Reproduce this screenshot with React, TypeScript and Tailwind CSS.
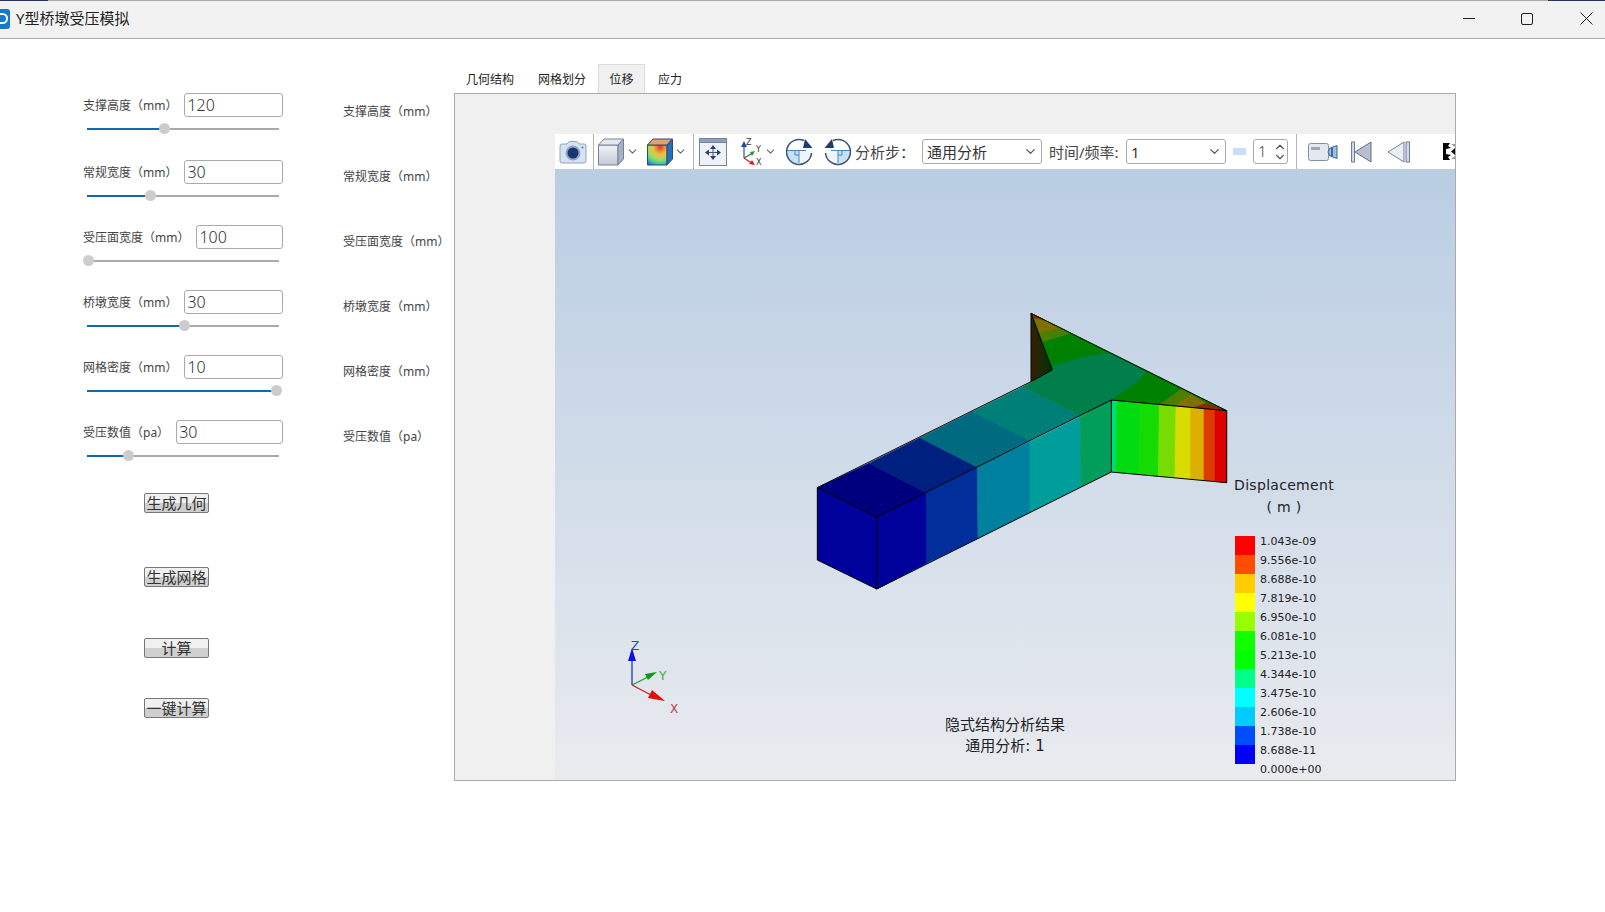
import React from "react";
import { ChevronDown, ChevronUp } from "lucide-react";

const PARAMS = [
  { label: "支撑高度（mm）", value: "120", thumb: 77 },
  { label: "常规宽度（mm）", value: "30", thumb: 63 },
  { label: "受压面宽度（mm）", value: "100", thumb: 1 },
  { label: "桥墩宽度（mm）", value: "30", thumb: 97 },
  { label: "网格密度（mm）", value: "10", thumb: 189 },
  { label: "受压数值（pa）", value: "30", thumb: 41 },
];

const LEGEND = [
  { color: "#ff0000", text: "1.043e-09" },
  { color: "#ff4d00", text: "9.556e-10" },
  { color: "#ffcc00", text: "8.688e-10" },
  { color: "#ffff00", text: "7.819e-10" },
  { color: "#99ff00", text: "6.950e-10" },
  { color: "#11ff00", text: "6.081e-10" },
  { color: "#00ff00", text: "5.213e-10" },
  { color: "#00ff88", text: "4.344e-10" },
  { color: "#00ffff", text: "3.475e-10" },
  { color: "#00ccff", text: "2.606e-10" },
  { color: "#004dff", text: "1.738e-10" },
  { color: "#0000ff", text: "8.688e-11" },
];

const TOP_FACE = [
  { fill: "#00007f", d: "52,563 207,490 378,577 230,651" },
  { fill: "#00207f", d: "207,490 360,413 530,500 378,577" },
  { fill: "#006b80", d: "360,413 517,335 690,420 530,500" },
  { fill: "#007f78", d: "517,335 670,260 838,347 690,420" },
  { fill: "#008000", d: "757,210 693,40 1280,332 934,300" },
  { fill: "#7f7000", d: "703,55 730,58 785,85 718,100" },
  { fill: "#4a8000", d: "718,100 785,85 812,99 728,125" },
  { fill: "#8a2a00", d: "693,40 730,58 703,55" },
  { fill: "#4a8000", d: "1143,268 1172,283 1125,316 1085,310" },
  { fill: "#7f7000", d: "1172,283 1220,310 1185,322 1125,316" },
  { fill: "#8a2a00", d: "1220,310 1280,332 1185,322" },
  { fill: "#007f4a", d: "670,260 757,210 760,197 860,170 925,158 1035,213 1020,240 960,280 934,300 838,347" },
];

const SIDE_FACE = [
  { fill: "#00009b", d: "230,651 380,577 380,790 230,867" },
  { fill: "#002e9b", d: "380,577 532,500 534,715 380,790" },
  { fill: "#00809f", d: "532,500 690,425 690,637 534,715" },
  { fill: "#009e9a", d: "690,425 840,350 843,560 690,637" },
  { fill: "#009e5a", d: "840,350 934,300 934,516 843,560" },
  { fill: "#00dc78", d: "934,300 950,302 948,517 934,516" },
  { fill: "#00dc10", d: "950,302 1021,308 1018,523 948,517" },
  { fill: "#14dc00", d: "1021,308 1078,314 1075,528 1018,523" },
  { fill: "#78dc00", d: "1078,314 1128,319 1125,533 1075,528" },
  { fill: "#d8dc00", d: "1128,319 1172,323 1172,537 1125,533" },
  { fill: "#dcb000", d: "1172,323 1212,326 1212,541 1172,537" },
  { fill: "#dc3c00", d: "1212,326 1245,329 1245,544 1212,541" },
  { fill: "#dc0000", d: "1245,329 1280,332 1280,548 1245,544" },
];

function Model() {
  return (
    <svg className="absolute left-[245px] top-[131px] h-[300px] w-[440px]" viewBox="0 0 1320 900">
      <defs>
        <linearGradient id="wing" x1="0" x2="1" y1="0" y2="0">
          <stop offset="0" stopColor="#3a1c04" />
          <stop offset="0.5" stopColor="#1c2a04" />
          <stop offset="1" stopColor="#003000" />
        </linearGradient>
      </defs>
      <polygon points="52,563 230,651 230,867 52,780" fill="#00009b" />
      {SIDE_FACE.map((p) => (
        <polygon key={p.d} points={p.d} fill={p.fill} stroke={p.fill} strokeWidth="2" />
      ))}
      {TOP_FACE.map((p) => (
        <polygon key={p.d} points={p.d} fill={p.fill} stroke={p.fill} strokeWidth="2" />
      ))}
      <polygon points="693,40 757,210 693,245" fill="url(#wing)" />
      <g fill="none" stroke="#000" strokeWidth="3" strokeLinejoin="round">
        <path d="M230 651 L52 563 L52 780 L230 867 L934 516 L934 300 L230 651 L230 867" />
        <path d="M52 563 L693 245 L757 210 L693 40 L693 245" />
        <path d="M693 40 L1280 332 L1280 548 L934 516 M934 300 L1280 332" />
      </g>
    </svg>
  );
}

function Triad() {
  return (
    <svg className="absolute left-[60px] top-[466px] h-[80px] w-[70px]" viewBox="0 0 70 80">
      <path d="M17 50 V24" stroke="#2f3fc0" strokeWidth="1.4" />
      <path d="M17 13 L21 26 H13 Z" fill="#0a14e0" />
      <path d="M17 50 L33 42" stroke="#20a020" strokeWidth="1.2" />
      <path d="M42 37 L33 45 L30 39 Z" fill="#0a9a14" />
      <path d="M17 50 L36 60" stroke="#c02020" strokeWidth="1.2" />
      <path d="M50 66 L33 63 L37 55 Z" fill="#e80c0c" />
      <text x="16" y="15" fontSize="12" fill="#3040d8" fontFamily="DejaVu Sans">Z</text>
      <text x="44" y="45" fontSize="12" fill="#30b040" fontFamily="DejaVu Sans">Y</text>
      <text x="55" y="78" fontSize="12" fill="#c04048" fontFamily="DejaVu Sans">X</text>
    </svg>
  );
}

function CameraIcon() {
  return (
    <svg className="ml-[4px] h-[26px] w-[28px] shrink-0" viewBox="0 0 28 26">
      <path d="M1 7 Q1 5 3 5 H8 L10 2.5 H18 L20 5 H25 Q27 5 27 7 V22 Q27 24 25 24 H3 Q1 24 1 22 Z" fill="#d6e2f0" stroke="#8ea6c8" />
      <circle cx="14" cy="14" r="7.5" fill="#8fa6c6" />
      <circle cx="14" cy="14" r="5.5" fill="#1c3570" />
      <circle cx="23.5" cy="8.5" r="1" fill="#5a6f92" />
    </svg>
  );
}

function CubeIcon() {
  return (
    <svg className="ml-[4px] h-[28px] w-[26px] shrink-0" viewBox="0 0 26 28">
      <defs>
        <linearGradient id="cubeFront" x1="0" x2="0" y1="0" y2="1">
          <stop offset="0" stopColor="#f2f3f6" />
          <stop offset="1" stopColor="#c5c9d5" />
        </linearGradient>
      </defs>
      <path d="M0.5 7 H20 V27 H0.5 Z" fill="url(#cubeFront)" stroke="#72829e" />
      <path d="M0.5 7 L6 1 H25.5 L20 7 Z" fill="#e6e8ee" stroke="#72829e" />
      <path d="M20 7 L25.5 1 V21 L20 27 Z" fill="#a9b1c0" stroke="#72829e" />
    </svg>
  );
}

function ColorCubeIcon() {
  return (
    <svg className="ml-[8px] h-[28px] w-[26px] shrink-0" viewBox="0 0 26 28">
      <defs>
        <radialGradient id="heat" cx="0.65" cy="0.1" r="1.05">
          <stop offset="0" stopColor="#d83a2a" />
          <stop offset="0.35" stopColor="#f0c040" />
          <stop offset="0.6" stopColor="#9fdc60" />
          <stop offset="0.8" stopColor="#40c8a0" />
          <stop offset="1" stopColor="#2a60d0" />
        </radialGradient>
      </defs>
      <path d="M0.5 7 H20 V27 H0.5 Z" fill="url(#heat)" stroke="#2a4a80" />
      <path d="M0.5 7 L6 1 H25.5 L20 7 Z" fill="#e0a070" stroke="#2a4a80" />
      <path d="M20 7 L25.5 1 V21 L20 27 Z" fill="#2070c0" stroke="#2a4a80" />
    </svg>
  );
}

function FitIcon() {
  return (
    <svg className="ml-[5px] h-[28px] w-[28px] shrink-0" viewBox="0 0 28 28">
      <rect x="0.5" y="0.5" width="27" height="27" fill="#eef1f6" stroke="#74849f" />
      <rect x="0.5" y="0.5" width="27" height="4" fill="#8ea0bb" stroke="#74849f" />
      <path d="M14 9 V20 M8.5 14.5 H19.5" stroke="#44587a" />
      <path d="M14 7 L17 11 H11 Z M14 22 L17 18 H11 Z M6 14.5 L10 11.5 V17.5 Z M22 14.5 L18 11.5 V17.5 Z" fill="#2c4066" />
    </svg>
  );
}

function AxesIcon() {
  return (
    <svg className="ml-[13px] h-[28px] w-[24px] shrink-0" viewBox="0 0 24 28">
      <path d="M4 20 V7" stroke="#2850a0" strokeWidth="1.2" />
      <path d="M4 3 L7 9 H1 Z" fill="#1c4aa8" />
      <path d="M4 20 L13 15" stroke="#208030" strokeWidth="1.2" />
      <path d="M15 13 L10 14 L12 18 Z" fill="#18983a" />
      <path d="M4 20 L13 26" stroke="#d02030" strokeWidth="1.2" />
      <path d="M15 27 L9 26 L12 22 Z" fill="#e81828" />
      <text x="6" y="7" fontSize="8" fill="#333" fontFamily="DejaVu Sans">Z</text>
      <text x="16" y="14" fontSize="8" fill="#333" fontFamily="DejaVu Sans">Y</text>
      <text x="16" y="27" fontSize="8" fill="#333" fontFamily="DejaVu Sans">X</text>
    </svg>
  );
}

function RotateIcon({ className }: { className: string }) {
  return (
    <svg className={`h-[28px] w-[27px] shrink-0 ${className}`} viewBox="0 0 27 28">
      <path d="M0.8 12.5 H13 V25.5 A12.5 12.5 0 0 1 0.8 12.5 Z" fill="#c6e0f6" />
      <path d="M13 12.5 H25.4 A12.5 12.5 0 0 1 13 25.5 Z" fill="#eef6fc" />
      <path d="M0.8 12.5 H20 M13 12.5 V25 M9 12.5 V17 H13" fill="none" stroke="#4a86bc" />
      <path d="M18 2.5 A12.5 12.5 0 1 0 25.5 15" fill="none" stroke="#3c5272" strokeWidth="1.5" />
      <path d="M26.5 10 L19 1 L17 10 Z" fill="#1e3c6c" />
    </svg>
  );
}

function VideoIcon() {
  return (
    <svg className="ml-[11px] h-[18px] w-[30px] shrink-0" viewBox="0 0 30 18">
      <rect x="0.5" y="0.5" width="20" height="17" rx="2" fill="#e4e8f0" stroke="#7f90ac" />
      <rect x="3" y="4" width="9" height="3" fill="#a0a8b4" />
      <path d="M20 9 L22 5 L29 2.5 V15.5 L22 13 Z" fill="#9cc0e4" stroke="#3c5e90" />
      <path d="M24 5 V13" stroke="#28487c" strokeWidth="1.5" />
    </svg>
  );
}

function FirstIcon() {
  return (
    <svg className="ml-[13px] h-[22px] w-[21px] shrink-0" viewBox="0 0 21 22">
      <rect x="0.5" y="1" width="3" height="20" fill="#d4d8e2" stroke="#6c80a0" />
      <path d="M20 1 V21 L4 11 Z" fill="#b8bfcc" stroke="#5a7096" />
    </svg>
  );
}

function PrevIcon() {
  return (
    <svg className="ml-[15px] h-[22px] w-[23px] shrink-0" viewBox="0 0 23 22">
      <path d="M17 1 V21 L1 11 Z" fill="#eceef3" stroke="#6c80a0" />
      <rect x="19" y="1" width="3.5" height="20" fill="#d4d8e2" stroke="#6c80a0" />
    </svg>
  );
}

function CutIcon() {
  return (
    <svg className="ml-[33px] h-[17px] w-[12px] shrink-0" viewBox="0 0 12 17">
      <path d="M0 0 H7 L5 3 L8 5 L3 6 V11 L8 12 L5 14 L7 17 H0 Z" fill="#000" />
      <path d="M12 5 V12 L8 8.5 Z" fill="#111" />
      <path d="M8 1 H12 V4 Z M8 16 H12 V13 Z" fill="#999" />
    </svg>
  );
}

function Separator({ className }: { className: string }) {
  return <div className={`h-[35px] w-px shrink-0 bg-[#b4b4b4] ${className}`} />;
}

function Parameter({ label, value, thumb }: { label: string; value: string; thumb: number }) {
  return (
    <div className="w-[200px] first:mb-[2px]">
      <div className="flex h-[24px] items-center gap-[7px]">
        <span className="shrink-0 pt-[2px] text-[12px] text-[#444]">{label}</span>
        <input
          readOnly
          value={value}
          className="h-[24px] min-w-0 flex-1 rounded-[3px] border border-[#aaa] bg-white px-[2px] text-[16px] font-light text-[#333] outline-none"
        />
      </div>
      <div className="relative ml-[4px] mt-[7px] h-[10px] w-[192px]">
        <div className="absolute left-0 right-0 top-[4px] h-[2px] bg-[#aaa]" />
        <div className="absolute left-0 top-[4px] h-[2px] bg-[#1168b8]" style={{ width: thumb }} />
        <div className="absolute top-[-1px] h-[11px] w-[11px] rounded-full bg-[#ccc]" style={{ left: thumb - 5 }} />
      </div>
    </div>
  );
}

function ActionButton({ text, className }: { text: string; className: string }) {
  return (
    <button
      className={`ml-[61px] flex h-[20px] w-[65px] items-center justify-center rounded-[2px] border border-[#777] bg-[linear-gradient(#f0f0f0_50%,#cfcfcf_50%)] text-[15px] text-[#333] ${className}`}
    >
      {text}
    </button>
  );
}

function SelectBox({ text, className }: { text: string; className: string }) {
  return (
    <div className={`flex h-[25px] shrink-0 items-center justify-between rounded-[3px] border border-[#aaa] bg-white pl-[4px] pr-[3px] text-[15px] text-[#333] ${className}`}>
      <span className="pt-[2px]">{text}</span>
      <ChevronDown size={15} className="text-[#555]" />
    </div>
  );
}

export default function App() {
  return (
    <div className="flex h-[912px] w-[1605px] flex-col overflow-hidden bg-white font-['Noto_Sans','Noto_Sans_CJK_SC',sans-serif]">
      <header className="relative flex h-[39px] shrink-0 items-center border-y border-y-[#aaa] bg-[#f2f2f2] pb-[2px]">
        <div className="absolute left-0 top-[-1px] h-px w-[48px] bg-[#2a3560]" />
        <div className="absolute right-0 top-[-1px] h-px w-[57px] bg-[#2a3560]" />
        <div className="flex h-[20px] w-[10px] items-center justify-end overflow-hidden rounded-r-[3px] bg-[#1578c8]">
          <div className="mr-[2px] h-[11px] w-[8px] shrink-0 rounded-r-full border-2 border-l-0 border-white" />
        </div>
        <span className="ml-[6px] text-[15px] text-[#222]">Y型桥墩受压模拟</span>
        <div className="ml-auto flex items-center">
          <div className="h-px w-[12px] bg-[#222]" />
          <div className="ml-[46px] h-[12px] w-[12px] rounded-[2px] border border-[#222]" />
          <svg className="ml-[47px] mr-[12px] h-[13px] w-[13px]" viewBox="0 0 13 13">
            <path d="M0.5 0.5 L12.5 12.5 M12.5 0.5 L0.5 12.5" stroke="#222" />
          </svg>
        </div>
      </header>

      <main className="flex flex-1">
        <section className="w-[343px] shrink-0 pl-[83px] pt-[54px]">
          <div className="flex flex-col gap-[24px]">
            {PARAMS.map((p) => (
              <Parameter key={p.label} {...p} />
            ))}
          </div>
          <ActionButton text="生成几何" className="mt-[32px]" />
          <ActionButton text="生成网格" className="mt-[54px]" />
          <ActionButton text="计算" className="mt-[51px]" />
          <ActionButton text="一键计算" className="mt-[40px]" />
        </section>

        <section className="w-[111px] shrink-0 pt-[40px]">
          {PARAMS.map((p) => (
            <div key={p.label} className="flex h-[65px] items-center text-[12px] text-[#444]">
              {p.label}
            </div>
          ))}
        </section>

        <section className="w-[1002px] shrink-0 pt-[25px]">
          <nav className="flex h-[29px] items-end text-[12px] text-[#222]">
            <div className="flex h-[29px] w-[72px] items-center pl-[12px] pt-[2px]">几何结构</div>
            <div className="flex h-[29px] w-[72px] items-center pl-[12px] pt-[2px]">网格划分</div>
            <div className="flex h-[29px] w-[47px] items-center justify-center border border-b-0 border-[#ddd] bg-[#f0f0f0] pt-[2px]">位移</div>
            <div className="flex h-[29px] w-[60px] items-center pl-[13px] pt-[2px]">应力</div>
          </nav>
          <div className="h-[688px] border border-[#aaa] bg-[#f0f0f0] pl-[100px] pt-[40px]">
            <div className="flex h-[646px] w-[900px] flex-col">
              <div className="flex h-[35px] shrink-0 items-center overflow-hidden bg-white text-[#444]">
                <CameraIcon />
                <Separator className="ml-[6px]" />
                <CubeIcon />
                <ChevronDown size={13} className="ml-[2px] shrink-0 text-[#666]" />
                <ColorCubeIcon />
                <ChevronDown size={13} className="ml-[1px] shrink-0 text-[#666]" />
                <Separator className="ml-[6px]" />
                <FitIcon />
                <AxesIcon />
                <ChevronDown size={13} className="shrink-0 text-[#666]" />
                <RotateIcon className="ml-[9px]" />
                <RotateIcon className="ml-[11px] -scale-x-100" />
                <span className="ml-[4px] w-[67px] shrink-0 pt-[2px] text-[15px]">分析步：</span>
                <SelectBox text="通用分析" className="w-[120px]" />
                <span className="ml-[7px] w-[77px] shrink-0 pt-[2px] text-[15px]">时间/频率:</span>
                <SelectBox text="1" className="w-[100px]" />
                <div className="ml-[7px] h-[7px] w-[13px] shrink-0 bg-[#c8dff8]" />
                <div className="ml-[7px] flex h-[25px] w-[35px] shrink-0 items-center justify-between rounded-[3px] border border-[#aaa] bg-white pl-[4px] text-[15px] font-light">
                  <span>1</span>
                  <div className="flex flex-col text-[#555]">
                    <ChevronUp size={14} className="mb-[-3px]" />
                    <ChevronDown size={14} className="mt-[-1px]" />
                  </div>
                </div>
                <Separator className="ml-[8px]" />
                <VideoIcon />
                <FirstIcon />
                <PrevIcon />
                <CutIcon />
              </div>

              <div className="relative flex-1 overflow-hidden bg-[linear-gradient(#b9cde3,#e9ebef)]">
                <Model />
                <Triad />
                <div className="absolute left-[679px] top-[305px] flex w-[100px] flex-col items-center font-['DejaVu_Sans',sans-serif] text-[14px] leading-[22px] tracking-[0.3px] text-[#222]">
                  <span>Displacement</span>
                  <span>( m )</span>
                </div>
                <div className="absolute left-[680px] top-[367px] flex flex-col">
                  {LEGEND.map((item) => (
                    <div key={item.text} className="flex h-[19px] items-center">
                      <div className="h-[19px] w-[20px]" style={{ backgroundColor: item.color }} />
                    </div>
                  ))}
                </div>
                <div className="absolute left-[705px] top-[363px] flex flex-col font-['DejaVu_Sans',sans-serif] text-[11px] leading-[19px] text-[#222]">
                  {LEGEND.map((item) => (
                    <span key={item.text}>{item.text}</span>
                  ))}
                  <span>0.000e+00</span>
                </div>
                <div className="absolute left-[360px] top-[546px] flex w-[180px] flex-col items-center font-['DejaVu_Sans','Noto_Sans_CJK_SC',sans-serif] text-[15px] leading-[21px] text-[#222]">
                  <span>隐式结构分析结果</span>
                  <span>通用分析: 1</span>
                </div>
              </div>
            </div>
          </div>
        </section>
      </main>
    </div>
  );
}
